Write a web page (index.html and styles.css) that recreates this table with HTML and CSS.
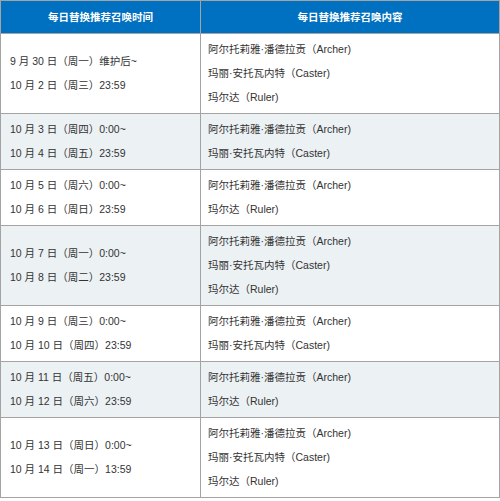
FILE: index.html
```html
<!DOCTYPE html>
<html lang="zh-CN">
<head>
<meta charset="utf-8">
<title>每日替换推荐召唤</title>
<link rel="stylesheet" href="styles.css">
</head>
<body>
<table class="schedule">
  <thead>
    <tr>
      <th class="col-time">每日替换推荐召唤时间</th>
      <th class="col-content">每日替换推荐召唤内容</th>
    </tr>
  </thead>
  <tbody>
    <tr>
      <td class="time">9 月 30 日（周一）维护后~<br>10 月 2 日（周三）23:59</td>
      <td class="content">阿尔托莉雅·潘德拉贡（Archer)<br>玛丽·安托瓦内特（Caster)<br>玛尔达（Ruler)</td>
    </tr>
    <tr class="alt">
      <td class="time">10 月 3 日（周四）0:00~<br>10 月 4 日（周五）23:59</td>
      <td class="content">阿尔托莉雅·潘德拉贡（Archer)<br>玛丽·安托瓦内特（Caster)</td>
    </tr>
    <tr>
      <td class="time">10 月 5 日（周六）0:00~<br>10 月 6 日（周日）23:59</td>
      <td class="content">阿尔托莉雅·潘德拉贡（Archer)<br>玛尔达（Ruler)</td>
    </tr>
    <tr class="alt">
      <td class="time">10 月 7 日（周一）0:00~<br>10 月 8 日（周二）23:59</td>
      <td class="content">阿尔托莉雅·潘德拉贡（Archer)<br>玛丽·安托瓦内特（Caster)<br>玛尔达（Ruler)</td>
    </tr>
    <tr>
      <td class="time">10 月 9 日（周三）0:00~<br>10 月 10 日（周四）23:59</td>
      <td class="content">阿尔托莉雅·潘德拉贡（Archer)<br>玛丽·安托瓦内特（Caster)</td>
    </tr>
    <tr class="alt">
      <td class="time">10 月 11 日（周五）0:00~<br>10 月 12 日（周六）23:59</td>
      <td class="content">阿尔托莉雅·潘德拉贡（Archer)<br>玛尔达（Ruler)</td>
    </tr>
    <tr>
      <td class="time">10 月 13 日（周日）0:00~<br>10 月 14 日（周一）13:59</td>
      <td class="content">阿尔托莉雅·潘德拉贡（Archer)<br>玛丽·安托瓦内特（Caster)<br>玛尔达（Ruler)</td>
    </tr>
  </tbody>
</table>
</body>
</html>
```
FILE: styles.css
```css
html, body {
  margin: 0;
  padding: 0;
  background: #ffffff;
}

.schedule {
  width: 500px;
  border-collapse: collapse;
  font-family: "Liberation Sans", "Noto Sans CJK SC", sans-serif;
  font-size: 10.5px;
  color: #333333;
  table-layout: fixed;
}

.schedule th,
.schedule td {
  border: 1px solid #a3a3a3;
}

.schedule th {
  background: #0070c0;
  color: #ffffff;
  font-family: "Noto Sans CJK SC", sans-serif;
  font-weight: bold;
  height: 32px;
  padding: 0;
  text-align: center;
  line-height: 32px;
}

.col-time {
  width: 199px;
}

.schedule td {
  line-height: 24px;
  padding: 3px 8px 4px 8px;
  vertical-align: middle;
  text-align: left;
}

.schedule td.time {
  padding-left: 9px;
}

.schedule td.content {
  padding-left: 7px;
}

.schedule tr.alt td {
  background: #ecf1f3;
}
```
